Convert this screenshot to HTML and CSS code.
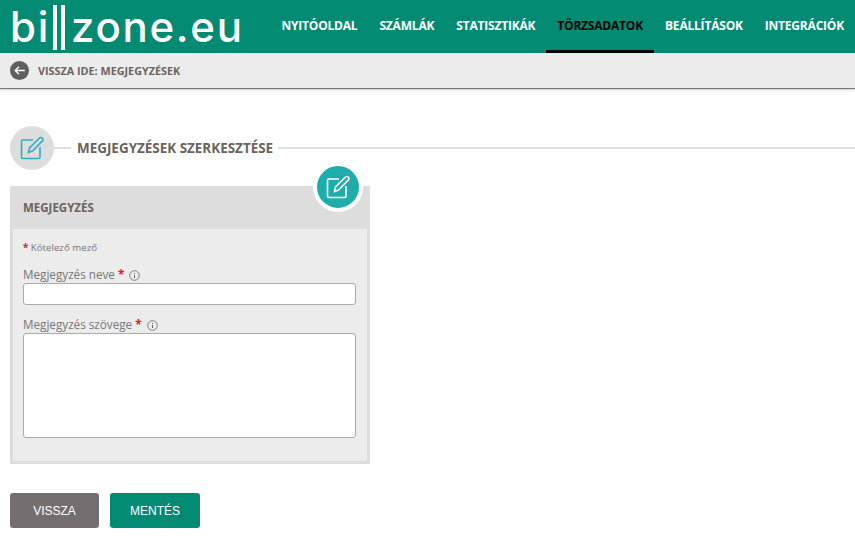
FILE: index.html
```html
<!DOCTYPE html>
<html lang="en">

<head>
    <meta charset="UTF-8">
    <meta name="viewport" content="width=device-width, initial-scale=1.0">
    <title>Megjegyzések szerkesztése</title>
    <link rel="stylesheet" href="styles.css">
</head>

<body>
    <!-- Top navigation -->
    <header class="topbar">
        <a class="logo" href="#" aria-label="billzone.eu">bi<span class="logo-bars"></span>zone.eu</a>
        <nav class="main-nav">
            <a href="#">Nyitóoldal</a>
            <a href="#">Számlák</a>
            <a href="#">Statisztikák</a>
            <a href="#" class="active">Törzsadatok</a>
            <a href="#">Beállítások</a>
            <a href="#">Integrációk</a>
        </nav>
    </header>

    <div class="backbar">
        <span class="back-icon">
            <svg width="19" height="19" viewBox="0 0 18 18">
                <circle cx="9" cy="9" r="9" fill="#5f5f5f" />
                <path d="M14 9H5M8.500 5.500 5 9l3.500 3.500" fill="none" stroke="#fff" stroke-width="1.300" />
            </svg>
        </span>
        <span>Vissza ide: Megjegyzések</span>
    </div>

    <main class="content">
        <div class="page-title">
            <span class="title-icon">
                <svg width="26" height="26" viewBox="0 0 26 26" fill="none" stroke="#2eb0c4" stroke-width="1.600">
                    <path d="M14 5H4a1.500 1.500 0 0 0-1.500 1.500V22A1.500 1.500 0 0 0 4 23.500h15.500A1.500 1.500 0 0 0 21 22V12" />
                    <path d="M9.500 17.500 10.500 13 20.500 3a1.800 1.800 0 0 1 2.600 0l.3.3a1.800 1.800 0 0 1 0 2.600L13.500 16z" />
                </svg>
            </span>
            <span class="title-dash"></span>
            <h1>Megjegyzések szerkesztése</h1>
            <span class="title-line"></span>
        </div>

        <section class="card">
            <span class="card-badge">
                <svg width="26" height="26" viewBox="0 0 26 26" fill="none" stroke="#fff" stroke-width="1.600">
                    <path d="M14 5H4a1.500 1.500 0 0 0-1.500 1.500V22A1.500 1.500 0 0 0 4 23.500h15.500A1.500 1.500 0 0 0 21 22V12" />
                    <path d="M9.500 17.500 10.500 13 20.500 3a1.800 1.800 0 0 1 2.600 0l.3.3a1.800 1.800 0 0 1 0 2.600L13.500 16z" />
                </svg>
            </span>
            <h2 class="card-head">Megjegyzés</h2>
            <form class="card-body">
                <p class="required-note"><span class="star">*</span> Kötelező mező</p>

                <label class="field-label" for="note-name">Megjegyzés neve <span class="star">*</span>
                    <svg class="info" width="11" height="11" viewBox="0 0 11 11" fill="none" stroke="#666">
                        <circle cx="5.500" cy="5.500" r="4.800" stroke-width=".8" />
                        <path d="M5.500 5v3M5.500 3v1" />
                    </svg>
                </label>
                <input class="field-input" type="text" id="note-name">

                <label class="field-label second" for="note-text">Megjegyzés szövege <span class="star">*</span>
                    <svg class="info" width="11" height="11" viewBox="0 0 11 11" fill="none" stroke="#666">
                        <circle cx="5.500" cy="5.500" r="4.800" stroke-width=".8" />
                        <path d="M5.500 5v3M5.500 3v1" />
                    </svg>
                </label>
                <textarea class="field-input field-area" id="note-text"></textarea>
            </form>
        </section>

        <div class="actions">
            <button class="btn btn-back" type="button">Vissza</button>
            <button class="btn btn-save" type="button">Mentés</button>
        </div>
    </main>
</body>

</html>
```

FILE: styles.css
```css
/* General */
body {
    font-family: "Open Sans", sans-serif;
    background-color: #fff;
    margin: 0;
    padding: 0;
    color: #6b635c;
}

/* Top navigation */
.topbar {
    display: flex;
    justify-content: space-between;
    height: 53px;
    background-color: #028a72;
}

.logo {
    display: block;
    margin-left: 10px;
    font-family: "Inter", sans-serif;
    font-size: 42px;
    font-weight: 500;
    line-height: 53px;
    letter-spacing: 1.700px;
    color: #fff;
    text-decoration: none;
    white-space: nowrap;
}

.logo-bars {
    display: inline-block;
    width: 4px;
    height: 45px;
    margin: 0 6px 0 3px;
    border-left: 4px solid #fff;
    border-right: 4px solid #fff;
    vertical-align: -8px;
}

.main-nav {
    display: flex;
}

.main-nav a {
    display: block;
    height: 50px;
    padding: 0 11px;
    font-size: 12px;
    font-weight: 700;
    line-height: 52px;
    letter-spacing: -0.2px;
    text-transform: uppercase;
    text-decoration: none;
    color: #fff;
}

.main-nav a.active {
    color: #000;
    border-bottom: 3px solid #000;
}

/* Back link bar */
.backbar {
    display: flex;
    align-items: center;
    gap: 9px;
    height: 35px;
    padding-left: 10px;
    background-color: #ececec;
    border-bottom: 1px solid #777;
    font-size: 10.800px;
    font-weight: 700;
    text-transform: uppercase;
    box-shadow: 0 1px 2px rgba(0, 0, 0, 0.2);
}

.back-icon {
    display: flex;
}

/* Page content */
.content {
    padding: 36px 0 0 10px;
}

.page-title {
    display: flex;
    align-items: center;
    height: 46px;
}

.title-icon {
    display: flex;
    align-items: center;
    justify-content: center;
    width: 44px;
    height: 44px;
    border-radius: 50%;
    background-color: #dddddd;
}

.title-dash {
    width: 17px;
    height: 2px;
    margin-right: 6px;
    background-color: #dddddd;
}

.page-title h1 {
    margin: 0 5px 0 0;
    font-size: 13.450px;
    font-weight: 700;
    text-transform: uppercase;
    white-space: nowrap;
}

.title-line {
    flex: 1;
    height: 2px;
    background-color: #dddddd;
}

/* Card */
.card {
    position: relative;
    width: 360px;
    margin-top: 15px;
    box-sizing: border-box;
    border: 3px solid #dddddd;
    border-top: 0;
    background-color: #ececec;
}

.card-badge {
    position: absolute;
    top: -24px;
    right: 4px;
    display: flex;
    align-items: center;
    justify-content: center;
    width: 42px;
    height: 42px;
    border: 4px solid #fff;
    border-radius: 50%;
    background-color: #1fadab;
}

.card-head {
    margin: 0 -3px;
    padding-left: 13px;
    height: 43px;
    background-color: #dddddd;
    font-size: 11.500px;
    font-weight: 700;
    line-height: 43px;
    text-transform: uppercase;
}

.card-body {
    display: flex;
    flex-direction: column;
    align-items: flex-start;
    height: 232px;
    padding: 0 10px;
}

.required-note {
    margin: 12px 0 0;
    font-size: 9.700px;
    line-height: 14px;
    color: #777;
}

.star {
    color: #e0161e;
    font-weight: 700;
}

.field-label {
    margin-top: 11px;
    font-size: 11.700px;
    line-height: 17px;
    color: #777;
    white-space: nowrap;
}

.field-label.second {
    margin-top: 11px;
}

.info {
    margin-left: 2px;
    vertical-align: -2px;
}

.field-input {
    display: block;
    box-sizing: border-box;
    width: 333px;
    height: 22px;
    margin: 0;
    padding: 2px 5px;
    background-color: #fff;
    border: 1px solid #aaa;
    border-radius: 3px;
    outline: none;
    resize: none;
}

.field-area {
    height: 105px;
}

/* Buttons */
.actions {
    display: flex;
    gap: 11px;
    margin-top: 29px;
}

.btn {
    width: 90px;
    height: 35px;
    padding: 0;
    border: none;
    border-radius: 3px;
    font-family: "Liberation Sans", Arial, sans-serif;
    font-size: 12px;
    color: #fff;
    text-transform: uppercase;
    cursor: pointer;
}

.btn-back {
    width: 89px;
    background-color: #746e71;
}

.btn-save {
    background-color: #028a72;
}
```
